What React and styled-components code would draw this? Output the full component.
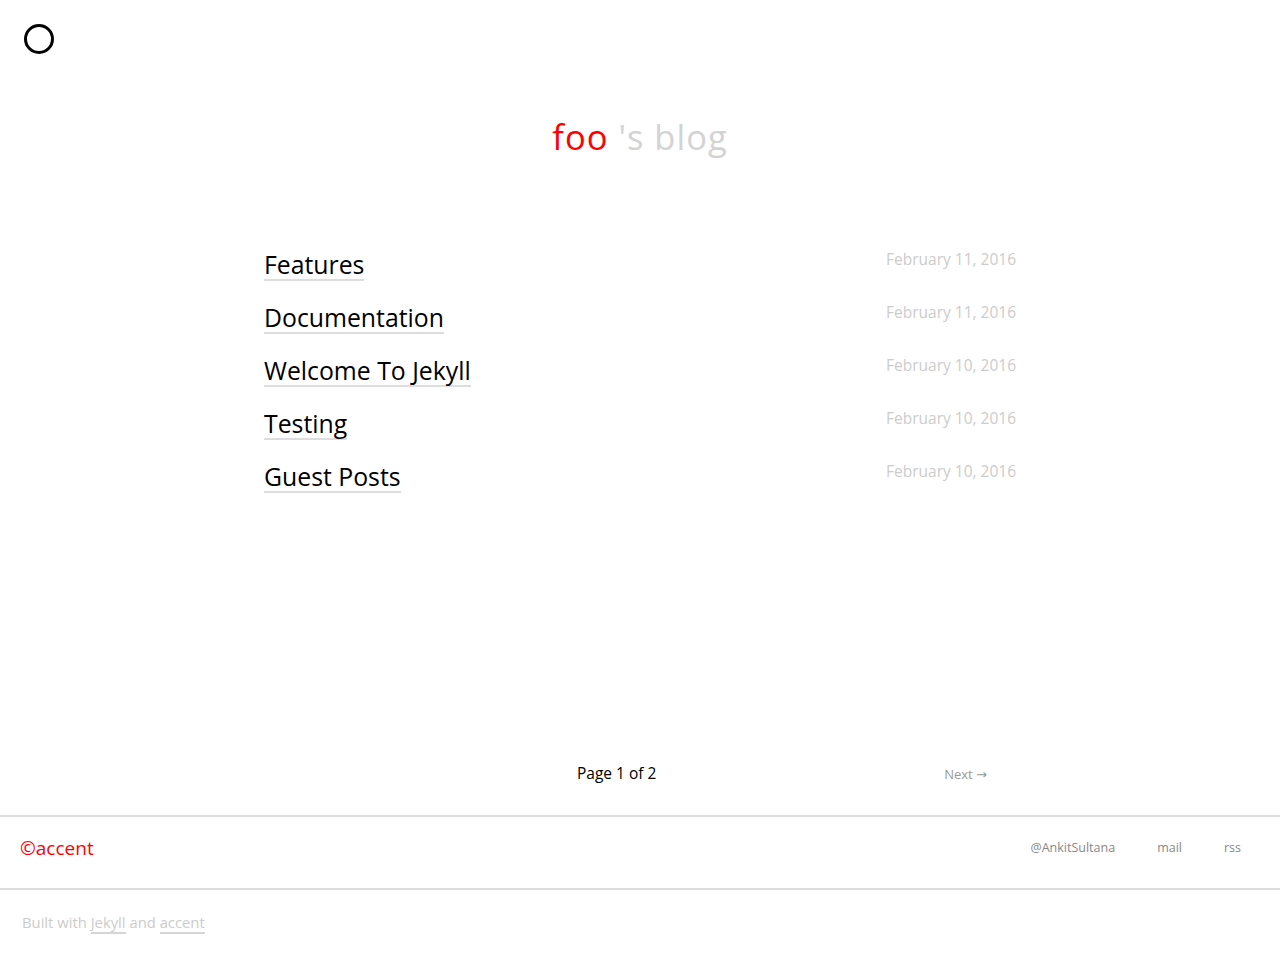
import React from 'react';
import styled, { createGlobalStyle } from 'styled-components';

const posts = [
  { title: 'Features', date: 'February 11, 2016' },
  { title: 'Documentation', date: 'February 11, 2016' },
  { title: 'Welcome To Jekyll', date: 'February 10, 2016' },
  { title: 'Testing', date: 'February 10, 2016' },
  { title: 'Guest Posts', date: 'February 10, 2016' },
];

const Global = createGlobalStyle`
  body {
    margin: 0;
    background: #fff;
    font-family: 'Open Sans', 'Noto Sans', sans-serif;
    color: #000;
  }
  a {
    color: inherit;
    text-decoration: none;
  }
`;

const TopBar = styled.header`
  height: 78px;
  padding: 24px 0 0 24px;
  box-sizing: border-box;
`;

const Ring = styled.div`
  width: 24px;
  height: 24px;
  border: 3px solid #000;
  border-radius: 50%;
`;

const Title = styled.h1`
  margin: 0;
  height: 130px;
  padding-top: 35px;
  box-sizing: border-box;
  text-align: center;
  font-weight: 400;
  font-size: 34.5px;
  letter-spacing: 1px;
  color: #d3d3d3;
  span {
    color: #f00;
  }
`;

const Main = styled.main`
  width: 752px;
  margin: 0 auto;
  min-height: 549px;
  padding-top: 41px;
  box-sizing: border-box;
`;

const Row = styled.div`
  display: flex;
  justify-content: space-between;
  align-items: flex-start;
  height: 53px;
`;

const PostLink = styled.a`
  font-size: 24.8px;
  font-weight: 500;
  line-height: 30px;
  border-bottom: 2px solid #ddd;
`;

const PostDate = styled.span`
  font-size: 15.5px;
  color: #ccc;
  line-height: 20px;
`;

const Pager = styled.nav`
  width: 752px;
  margin: 0 auto;
  height: 58px;
  display: grid;
  grid-template-columns: 313px 1fr auto;
  align-items: start;
  padding-top: 5px;
  box-sizing: border-box;
`;

const PageNum = styled.span`
  grid-column: 2;
  font-size: 15.5px;
  font-weight: 500;
  line-height: 22px;
`;

const NextLink = styled.a`
  grid-column: 3;
  font-size: 13px;
  color: #999;
  line-height: 24px;
  padding-right: 29px;
`;

const Arrow = styled.span`
  font-family: 'DejaVu Sans', sans-serif;
  font-size: 13px;
`;

const Footer = styled.footer`
  border-top: 2px solid #ddd;
  border-bottom: 2px solid #ddd;
  height: 75px;
  box-sizing: border-box;
  display: flex;
  align-items: center;
  justify-content: space-between;
  padding: 0 39px 10px 20px;
`;

const Brand = styled.a`
  color: #f00;
  font-size: 19px;
`;

const Social = styled.div`
  display: flex;
  gap: 42px;
  font-size: 12.5px;
  color: #888;
`;

const Credits = styled.p`
  margin: 0;
  padding: 22px 0 0 22px;
  font-size: 14.8px;
  color: #ccc;
`;

const CreditLink = styled.a`
  display: inline-block;
  line-height: 19px;
  border-bottom: 2px solid #d6d6d6;
`;

export default function App() {
  return (
    <>
      <Global />
      <TopBar>
        <Ring />
      </TopBar>
      <Title>
        <span>foo</span> 's blog
      </Title>
      <Main>
        {posts.map(p => (
          <Row key={p.title}>
            <PostLink href="#">{p.title}</PostLink>
            <PostDate>{p.date}</PostDate>
          </Row>
        ))}
      </Main>
      <Pager>
        <PageNum>Page 1 of 2</PageNum>
        <NextLink href="#">
          Next <Arrow>→</Arrow>
        </NextLink>
      </Pager>
      <Footer>
        <Brand href="#">©accent</Brand>
        <Social>
          <a href="#">@AnkitSultana</a>
          <a href="#">mail</a>
          <a href="#">rss</a>
        </Social>
      </Footer>
      <Credits>
        Built with <CreditLink href="#">Jekyll</CreditLink> and{' '}
        <CreditLink href="#">accent</CreditLink>
      </Credits>
    </>
  );
}
